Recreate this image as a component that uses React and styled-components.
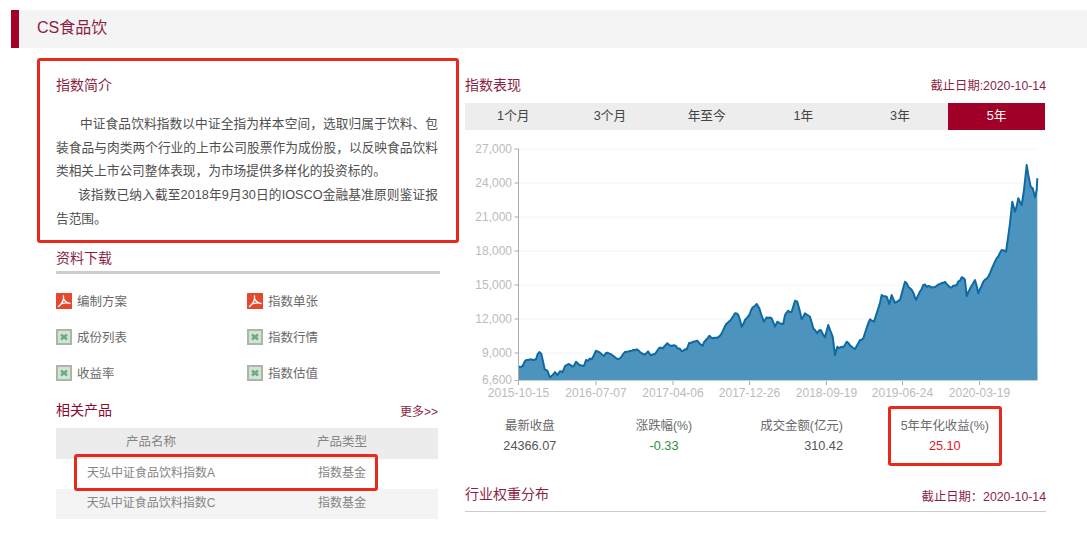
import React from 'react';
import styled, { createGlobalStyle } from 'styled-components';

const wine = '#a10029';
const titleColor = '#8c1f3f';

const GlobalStyle = createGlobalStyle`
  body {
    margin: 0;
    background: #fff;
    font-family: "Liberation Sans", "Noto Sans CJK SC", sans-serif;
    font-size: 12.7px;
    color: #555;
  }
`;

const Page = styled.div`
  width: 1087px;
  height: 534px;
  padding: 10px 0 0 11px;
  box-sizing: border-box;
  overflow: hidden;
`;

const Header = styled.h1`
  margin: 0;
  height: 38px;
  line-height: 36px;
  padding-left: 18px;
  border-left: 8px solid ${wine};
  background: #f4f4f4;
  font-size: 16px;
  font-weight: 400;
  color: ${titleColor};
`;

const Columns = styled.div`
  display: grid;
  grid-template-columns: 384px 581px;
  column-gap: 25px;
  padding-left: 45px;
`;

const Column = styled.div`
  padding-top: 27px;
`;

const Highlight = styled.div`
  position: absolute;
  top: ${p => p.$top}px;
  right: ${p => p.$right}px;
  bottom: ${p => p.$bottom}px;
  left: ${p => p.$left}px;
  border: 3px solid #e8291c;
  border-radius: 3px;
  pointer-events: none;
`;

const Intro = styled.section`
  position: relative;
`;

const Title = styled.h2`
  margin: 0;
  font-size: 14px;
  line-height: 20px;
  font-weight: 400;
  color: ${titleColor};
`;

const Paragraph = styled.p`
  margin: 0;
  line-height: 23.7px;
  text-align: justify;
  text-indent: ${p => p.$indent}px;
  color: #4f4f4f;
`;

const IntroBody = styled.div`
  width: 382px;
  margin-top: 18px;
`;

const DownloadTitle = styled(Title)`
  margin-top: 16px;
  padding-bottom: 3px;
  border-bottom: 3px solid #cccccc;
`;

const DownloadGrid = styled.div`
  display: grid;
  grid-template-columns: 191px 191px;
  grid-auto-rows: 36px;
  margin-top: 9px;
`;

const DownloadItem = styled.a`
  display: flex;
  align-items: center;
  gap: 5px;
  font-size: 12.5px;
  color: #6a6a6a;
`;

const IconBox = styled.svg`
  display: block;
  width: 16px;
  height: 16px;
  flex: none;
`;

const ProductHead = styled.div`
  display: flex;
  justify-content: space-between;
  align-items: flex-end;
  width: 382px;
  margin-top: 9px;
`;

const ProductTitle = styled(Title)`
  color: #8a0a2c;
`;

const More = styled.a`
  font-size: 12px;
  line-height: 16px;
  color: ${titleColor};
`;

const ProductTable = styled.div`
  width: 382px;
  margin-top: 8px;
  position: relative;
`;

const ProductRow = styled.div`
  display: grid;
  grid-template-columns: 190px 192px;
  height: ${p => p.$height}px;
  box-sizing: border-box;
  padding-bottom: 5px;
  align-items: center;
  text-align: center;
  font-size: ${p => p.$size}px;
  background: ${p => p.$bg};
  color: #858585;
`;

const TitleRow = styled.div`
  display: flex;
  justify-content: space-between;
  align-items: center;
  height: 20px;
  box-sizing: content-box;
  padding-bottom: ${p => p.$underline ? 7 : 0}px;
  border-bottom: ${p => p.$underline ? '1px solid #cccccc' : '0'};
`;

const DateNote = styled.span`
  font-size: 12.3px;
  line-height: 20px;
  padding-top: ${p => p.$drop}px;
  color: ${titleColor};
`;

const Tabs = styled.div`
  display: grid;
  grid-template-columns: repeat(6, 1fr);
  width: 580px;
  height: 27px;
  margin-top: 8px;
  background: #ededed;
`;

const Tab = styled.div`
  display: flex;
  align-items: center;
  justify-content: center;
  padding-bottom: 5px;
  background: ${p => p.$active ? wine : 'transparent'};
  color: ${p => p.$active ? '#fff' : '#444'};
`;

const ChartSvg = styled.svg`
  display: block;
  width: 581px;
  height: 270px;
`;

const AxisText = styled.text`
  font-size: 12px;
  fill: #bbbbbb;
`;

const Stats = styled.div`
  display: grid;
  grid-template-columns: 129.6px 138.8px 136.4px 150px;
  margin-top: 16px;
  line-height: 20px;
  text-align: center;
  position: relative;
`;

const StatLabel = styled.div`
  font-size: 12.4px;
  color: #6a6a6a;
`;

const StatValue = styled.div`
  color: ${p => p.$color};
  padding-left: ${p => p.$shift}px;
`;

const BottomHead = styled.div`
  margin-top: 28px;
`;

// chart outline traced from the picture, in page coordinates
const from = (ox, oy, pts) => pts.map(([x, y]) => [ox + x / 3, oy + y / 3]);

const traced = [
  ...from(510, 280, [[25,258],[30,262],[38,258],[45,243],[55,240],[62,238],[70,240],[78,238],[83,222],[88,216],[94,222],[98,240],[104,268],[112,272],[120,292],[128,285],[135,276],[142,286],[150,274],[158,276],[165,258],[175,252],[188,260],[198,245],[208,255],[222,258],[228,240],[245,238],[258,212],[270,218],[282,228],[292,218],[305,224],[318,234],[328,236],[345,216],[360,213],[380,208],[392,218],[405,224],[414,214],[422,226],[435,222],[448,203],[458,205],[472,190],[485,198],[498,198],[515,214],[530,208],[538,188],[550,185],[562,182]]),
  ...from(700, 280, [[0,192],[8,197],[18,180],[28,167],[40,175],[55,172],[62,165],[78,133],[92,120],[105,100],[115,105],[125,140],[135,120],[148,105],[158,82],[170,72],[178,85],[186,110],[192,125],[200,112],[215,115],[225,140],[232,125],[250,132],[255,105],[265,92],[275,95],[285,62],[292,65],[305,118],[315,100],[330,110],[340,145],[352,160],[362,150],[375,172],[385,135],[398,170],[405,225],[412,200],[430,202],[440,185],[455,200],[465,207],[480,180],[490,175],[498,150],[510,118],[522,125],[535,85],[545,45],[560,50],[568,72],[575,45],[585,68],[600,60],[615,5],[630,25],[640,38],[648,60]]),
  ...from(900, 140, [[70,435],[85,438],[100,442],[120,432],[135,426],[150,442],[170,435],[185,412],[195,420],[200,468],[213,440],[225,420],[235,460],[250,425],[265,410],[285,365],[305,330],[318,335],[330,250],[337,185],[345,215],[355,175],[365,195],[372,150],[380,75],[385,105],[392,140],[398,145],[405,172],[410,150],[412,115]]),
];

// the traced points are sparse, so fill in the small daily wobble between them
const line = traced.flatMap(([x, y], i) => {
  const next = traced[i + 1];
  if (!next) return [[x, y]];
  const steps = Math.max(1, Math.floor((next[0] - x) / 1.6));
  const out = [];
  for (let s = 0; s < steps; s++) {
    const t = s / steps;
    const px = x + (next[0] - x) * t;
    const wobble = s === 0 ? 0 : Math.sin(px * 2.3) * 0.7 + Math.sin(px * 5.1) * 0.5;
    out.push([px, y + (next[1] - y) * t + wobble]);
  }
  return out;
});

const linePath = line.map(([x, y], i) => `${i ? 'L' : 'M'}${x.toFixed(1)} ${y.toFixed(1)}`).join(' ');
const areaPath = `${linePath} L1037.5 380.5 L518.5 380.5 Z`;

const yTicks = [
  ['27,000', 149], ['24,000', 183], ['21,000', 217], ['18,000', 251],
  ['15,000', 285], ['12,000', 319], ['9,000', 353], ['6,600', 380.5],
];

const xTicks = [
  ['2015-10-15', 518.5], ['2016-07-07', 596], ['2017-04-06', 673], ['2017-12-26', 749.5],
  ['2018-09-19', 826.5], ['2019-06-24', 902.5], ['2020-03-19', 979.5],
];

const Chart = () => (
  <ChartSvg viewBox="465 130 581 270">
    {yTicks.map(([label, y]) => (
      <g key={label}>
        {y < 380 && <line x1="518.5" x2="1037.5" y1={y} y2={y} stroke="#f4f4f4" />}
        <line x1="514.5" x2="518.5" y1={y} y2={y} stroke="#aaaaaa" />
        <AxisText x="512" y={y + 3.5} textAnchor="end">{label}</AxisText>
      </g>
    ))}
    <path d={areaPath} fill="#4c93be" />
    <path d={linePath} fill="none" stroke="#0f6aa3" strokeWidth="2" strokeLinejoin="round" />
    <line x1="518.5" x2="518.5" y1="149" y2="385" stroke="#aaaaaa" />
    <line x1="518.5" x2="1037.5" y1="380.5" y2="380.5" stroke="#c4ced6" />
    {xTicks.map(([label, x]) => (
      <g key={label}>
        <line x1={x} x2={x} y1="381" y2="385" stroke="#aaaaaa" />
        <AxisText x={x} y="397" textAnchor="middle">{label}</AxisText>
      </g>
    ))}
  </ChartSvg>
);

const PdfIcon = () => (
  <IconBox viewBox="0 0 16 16">
    <rect width="16" height="16" rx="0.5" fill="#e5482f" />
    <path d="M7.5 3C8 7 5.500 11 2.500 13.500M7.500 5.500C8.800 8.500 11 10 14 10.500M4.800 11.200C7 10 9.500 9.700 12 10" fill="none" stroke="#fff" strokeWidth="1.300" strokeLinecap="round" />
  </IconBox>
);

const ExcelIcon = () => (
  <IconBox viewBox="0 0 16 16">
    <rect x="1" y="1" width="14" height="14" fill="#d5e3d7" stroke="#a9b7a9" strokeWidth="2" />
    <path d="M5 5.500l6 5M11 5.500l-6 5" stroke="#6aad80" strokeWidth="2.600" />
  </IconBox>
);

const downloads = [
  ['编制方案', 'pdf'], ['指数单张', 'pdf'],
  ['成份列表', 'xls'], ['指数行情', 'xls'],
  ['收益率', 'xls'], ['指数估值', 'xls'],
];

const ranges = ['1个月', '3个月', '年至今', '1年', '3年', '5年'];

const stats = [
  { label: '最新收盘', value: '24366.07', color: '#555', shift: 0 },
  { label: '涨跌幅(%)', value: '-0.33', color: '#2f8f3a', shift: 0 },
  { label: '成交金额(亿元)', value: '310.42', color: '#555', shift: 44 },
  { label: '5年年化收益(%)', value: '25.10', color: '#e0152e', shift: 0 },
];

const App = () => (
  <Page>
    <GlobalStyle />
    <Header>CS食品饮</Header>
    <Columns>
      <Column>
        <Intro>
          <Title>指数简介</Title>
          <IntroBody>
            <Paragraph $indent={24}>中证食品饮料指数以中证全指为样本空间，选取归属于饮料、包装食品与肉类两个行业的上市公司股票作为成份股，以反映食品饮料类相关上市公司整体表现，为市场提供多样化的投资标的。</Paragraph>
            <Paragraph $indent={22}>该指数已纳入截至2018年9月30日的IOSCO金融基准原则鉴证报告范围。</Paragraph>
          </IntroBody>
          <Highlight $top={-17} $right={-19} $bottom={-11} $left={-19} />
        </Intro>

        <DownloadTitle>资料下载</DownloadTitle>
        <DownloadGrid>
          {downloads.map(([label, type]) => (
            <DownloadItem key={label}>
              {type === 'pdf' ? <PdfIcon /> : <ExcelIcon />}
              {label}
            </DownloadItem>
          ))}
        </DownloadGrid>

        <ProductHead>
          <ProductTitle>相关产品</ProductTitle>
          <More>更多&gt;&gt;</More>
        </ProductHead>
        <ProductTable>
          <ProductRow $height={31} $size={12.5} $bg="#ececec">
            <div>产品名称</div>
            <div>产品类型</div>
          </ProductRow>
          <ProductRow $height={30} $size={12} $bg="#fff">
            <div>天弘中证食品饮料指数A</div>
            <div>指数基金</div>
          </ProductRow>
          <ProductRow $height={30} $size={12} $bg="#f4f4f4">
            <div>天弘中证食品饮料指数C</div>
            <div>指数基金</div>
          </ProductRow>
          <Highlight $top={26} $right={60} $bottom={28} $left={18} />
        </ProductTable>
      </Column>

      <Column>
        <TitleRow>
          <Title>指数表现</Title>
          <DateNote $drop={2}>截止日期:2020-10-14</DateNote>
        </TitleRow>
        <Tabs>
          {ranges.map((r, i) => (
            <Tab key={r} $active={i === ranges.length - 1}>{r}</Tab>
          ))}
        </Tabs>
        <Chart />
        <Stats>
          {stats.map(s => (
            <div key={s.label}>
              <StatLabel>{s.label}</StatLabel>
              <StatValue $color={s.color} $shift={s.shift}>{s.value}</StatValue>
            </div>
          ))}
          <Highlight $top={-10} $right={44} $bottom={-10} $left={423} />
        </Stats>
        <BottomHead>
          <TitleRow $underline>
            <Title>行业权重分布</Title>
            <DateNote $drop={6}>截止日期：2020-10-14</DateNote>
          </TitleRow>
        </BottomHead>
      </Column>
    </Columns>
  </Page>
);

export default App;
